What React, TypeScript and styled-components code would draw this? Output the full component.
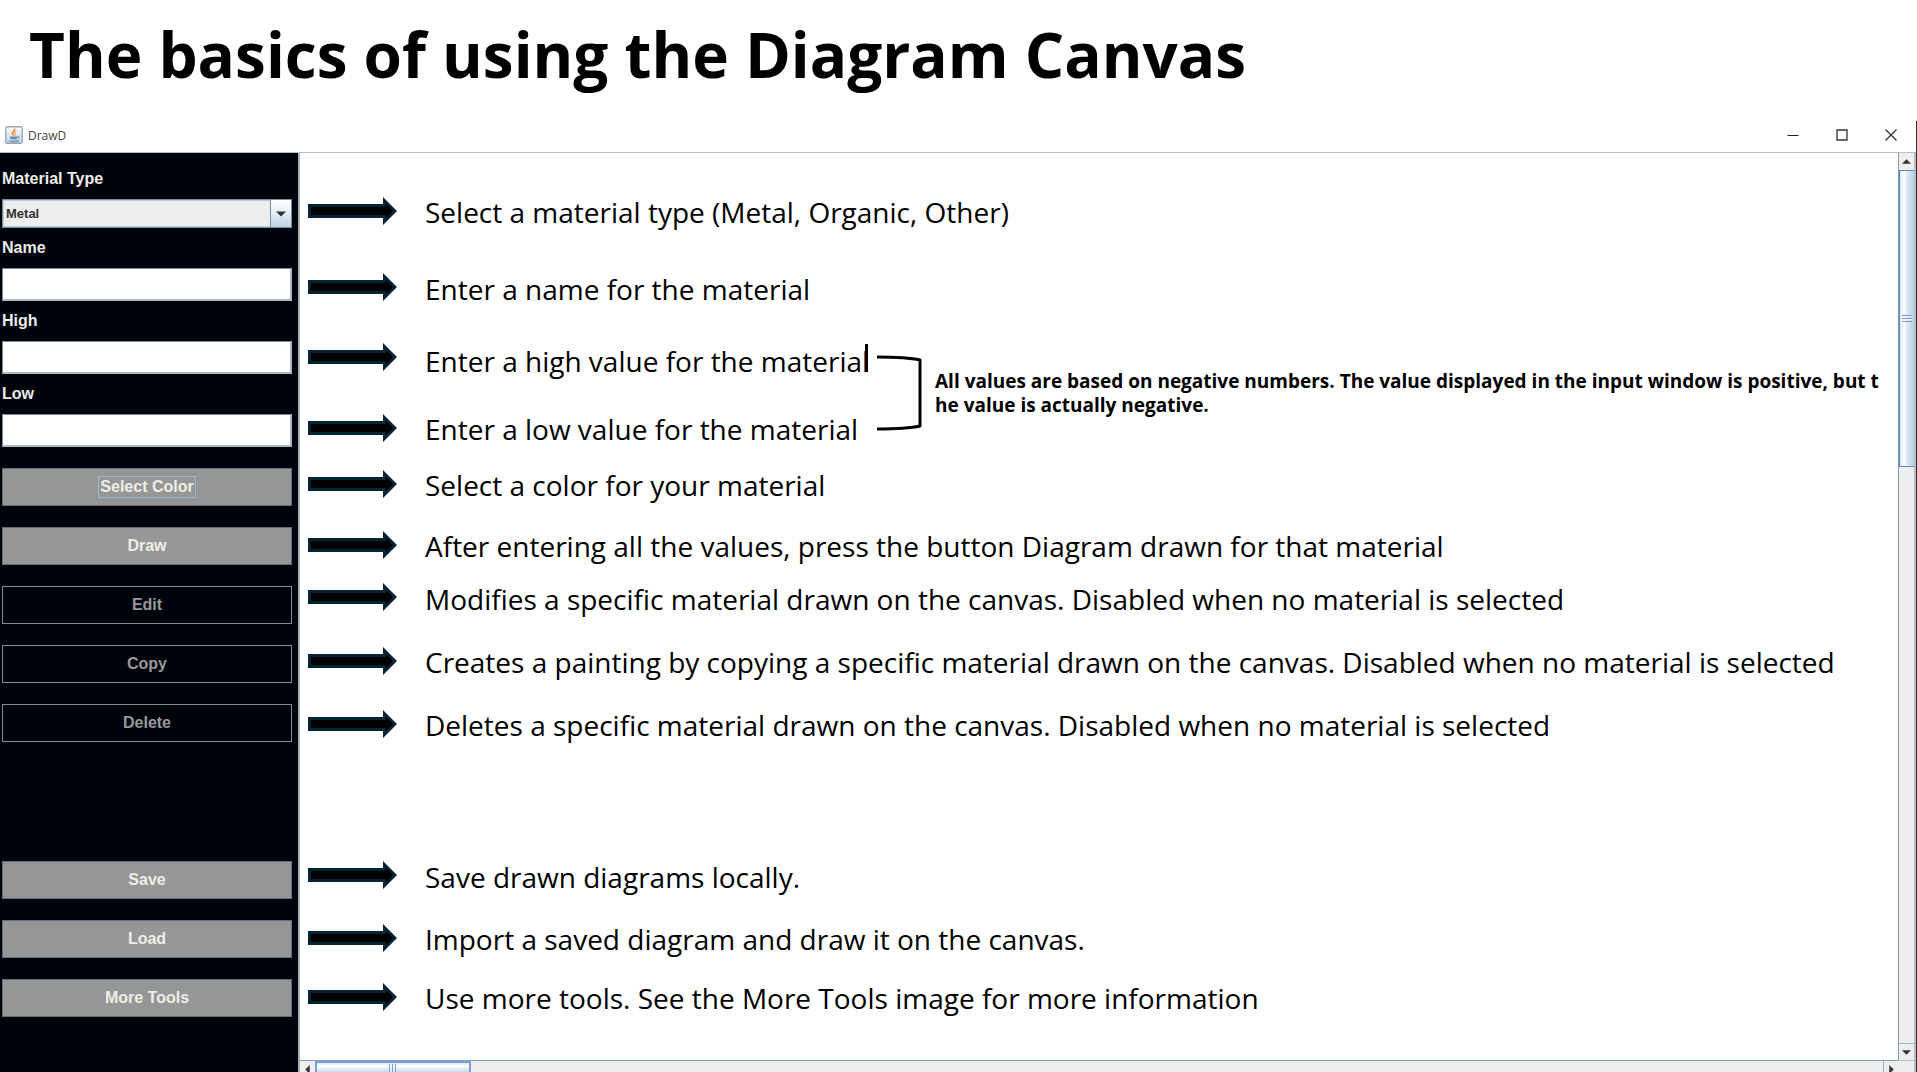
import React from "react";
import styled, { createGlobalStyle, css } from "styled-components";

const Global = createGlobalStyle`
  *, *::before, *::after { box-sizing: border-box; }
  html, body, #root { height: 100%; }
  body { margin: 0; background: #fff; color: #000; overflow: hidden; }
`;

const slideFont = css`font-family: "Open Sans", "Noto Sans", sans-serif;`;
const swingFont = css`font-family: "Liberation Sans", Arial, sans-serif; font-weight: 700;`;

const Page = styled.main`
  ${slideFont}
  height: 100%;
  display: flex;
  flex-direction: column;
`;

const Title = styled.h1`
  flex: none;
  margin: 0;
  padding: 10px 29px 23px;
  font-size: 62px;
  line-height: 88px;
  font-weight: 700;
  white-space: nowrap;
`;

const Frame = styled.section`
  flex: 1;
  min-height: 0;
  display: flex;
  flex-direction: column;
  border-right: 1px solid #2b2b2b;
`;

const TitleBar = styled.header`
  flex: none;
  height: 31px;
  display: flex;
  align-items: center;
  gap: 5px;
  padding: 0 13px 3px 5px;
  font-size: 12px;
  color: #444;
`;

const WindowButtons = styled.div`
  margin-left: auto;
  display: flex;
  gap: 25px;
`;

const WindowButton = styled.button`
  width: 24px;
  height: 24px;
  padding: 0;
  border: 0;
  background: none;
  display: grid;
  place-items: center;
`;

const Body = styled.div`
  flex: 1;
  min-height: 0;
  display: flex;
  border-top: 1px solid #b4bfca;
`;

const Sidebar = styled.form`
  flex: none;
  width: 298px;
  padding: 6px 6px 0 2px;
  background: #00020c;
  overflow: hidden;
`;

const Label = styled.label`
  ${swingFont}
  display: flex;
  align-items: center;
  height: 40px;
  font-size: 16px;
  color: #eeeee6;
`;

const SelectBox = styled.div`
  display: grid;
  height: 29px;
  border: 1px solid #7a8a99;
  background: #eee;
  grid-template-columns: 1fr 21px;
`;

const Select = styled.select`
  ${swingFont}
  grid-area: 1 / 1 / 2 / 3;
  appearance: none;
  border: 1px solid #b8cfe5;
  margin: 0;
  padding: 0 2px;
  font-size: 13px;
  color: #333;
  background: transparent;
`;

const SelectArrow = styled.span`
  grid-area: 1 / 2 / 2 / 3;
  display: grid;
  place-items: center;
  border-left: 1px solid #7a8a99;
  background: linear-gradient(#fff, #e4edf6 50%, #bcd1e6);
  pointer-events: none;
`;

const Field = styled.input`
  ${swingFont}
  display: block;
  width: 100%;
  height: 33px;
  padding: 0 4px;
  border: 1px solid #7a8a99;
  border-right: 2px solid #b0b8c2;
  border-bottom: 2px solid #b0b8c2;
  font-size: 16px;
  background: #fff;
`;

const Buttons = styled.div`
  display: flex;
  flex-direction: column;
  gap: 21px;
  padding-top: 21px;
`;

const FileButtons = styled(Buttons)`
  padding-top: 119px;
`;

const Button = styled.button`
  ${swingFont}
  height: 38px;
  padding: 0;
  border: 1px solid #5f6f7f;
  background: #969696;
  color: #eeeee6;
  font-size: 16px;

  &:disabled {
    border-color: #8a8a8a;
    background: #00020c;
    color: #999;
  }
`;

const Focused = styled.span`
  display: inline-block;
  padding: 0 1px;
  line-height: 20px;
  outline: 1px solid #9fb8d2;
`;

const Viewport = styled.div`
  flex: 1;
  min-width: 0;
  display: grid;
  grid-template-columns: minmax(0, 1fr) 18px;
  grid-template-rows: minmax(0, 1fr) 12px;
  border-left: 2px solid #a8b2be;
`;

const Canvas = styled.div`
  position: relative;
  display: flex;
  gap: 28px;
  padding-left: 8px;
`;

const ArrowColumn = styled.div`
  flex: none;
  width: 89px;
`;

const NoteList = styled.ol`
  margin: 0;
  padding: 0;
  list-style: none;
  font-size: 28px;
  line-height: 40px;
  white-space: nowrap;
`;

const ArrowCell = styled.div<{ $gap: number }>`
  height: 28px;
  margin-top: ${(p) => p.$gap}px;
  svg { display: block; }
`;

const Note = styled.li<{ $gap: number }>`
  height: 40px;
  margin-top: ${(p) => p.$gap}px;
`;

const Remark = styled.aside`
  position: absolute;
  top: 202px;
  left: 577px;
  display: flex;
  align-items: center;
  gap: 13px;
  z-index: 1;
`;

const RemarkText = styled.p`
  margin: 0;
  font-size: 19px;
  line-height: 24px;
  font-weight: 700;
  white-space: nowrap;
`;

const Caret = styled.span`
  display: inline-block;
  width: 3px;
  height: 28px;
  margin-left: -4px;
  background: #000;
`;

const VBar = styled.div`
  display: flex;
  flex-direction: column;
  border-left: 1px solid #7f9db9;
  border-right: 2px solid #b8bfc6;
  background: #eee;
`;

const HBar = styled.div`
  display: flex;
  overflow: hidden;
  border-top: 1px solid #7f9db9;
  background: #eee;
`;

const BarButton = styled.button`
  flex: none;
  width: 15px;
  height: 17px;
  padding: 0;
  border: 0;
  background: #eee;
  display: grid;
  place-items: center;
`;

const EndButton = styled(BarButton)<{ $edge: "top" | "left" }>`
  border-${(p) => p.$edge}: 1px solid #9fb1c4;
`;

const Track = styled.div<{ $vertical?: boolean }>`
  flex: 1;
  display: flex;
  flex-direction: ${(p) => (p.$vertical ? "column" : "row")};
`;

const VThumb = styled.div`
  height: 34%;
  display: grid;
  place-items: center;
  border: 1px solid #6382bf;
  border-width: 1px 0 1px 1px;
  background: linear-gradient(90deg, #dbe7f2, #fff 30%, #dfe9f3 50%, #b8cfe5);
`;

const HThumb = styled.div`
  width: 156px;
  height: 16px;
  display: grid;
  place-items: center;
  border: 2px solid #7f9fd4;
  background: linear-gradient(#dbe7f2, #fff 25%, #dfe9f3 50%, #b8cfe5);
`;

const Corner = styled.div`
  border-top: 1px solid #b4bfca;
  border-right: 2px solid #b8bfc6;
  background: #eee;
`;

const Triangle = ({ turn, size = 9 }: { turn: number; size?: number }) => (
  <svg width={size} height={size} viewBox="0 0 10 10" aria-hidden="true">
    <path d="M0 2.5H10L5 7.5Z" fill="#333" transform={`rotate(${turn} 5 5)`} />
  </svg>
);

const Grip = ({ turn = 0 }: { turn?: number }) => (
  <svg width="10" height="10" viewBox="0 0 10 10" aria-hidden="true">
    <g transform={`rotate(${turn} 5 5)`}>
      <path d="M0 2.5H10M0 5.5H10M0 8.5H10" stroke="#7f9fd4" />
      <path d="M0 3.5H10M0 6.5H10" stroke="#e8f0fa" />
    </g>
  </svg>
);

const Arrow = () => (
  <svg width="89" height="28" viewBox="0 0 89 28">
    <path d="M0 7H75V0L89 14L75 28V21H0Z" fill="#042433" />
    <path d="M3 10H78V7L85 14L78 21V18H3Z" fill="#000" />
  </svg>
);

const JavaIcon = () => (
  <svg width="18" height="18" viewBox="0 0 18 18" aria-hidden="true">
    <defs>
      <linearGradient id="tile" x1="0" y1="0" x2="0" y2="1">
        <stop offset="0" stopColor="#fbfdff" />
        <stop offset="1" stopColor="#c3d3e0" />
      </linearGradient>
    </defs>
    <rect x="0.75" y="0.75" width="16.5" height="16.5" rx="1.5" fill="url(#tile)" stroke="#8fa9bd" strokeWidth="1.3" />
    <path d="M9.6 2.5C10.8 4.6 6.6 5.6 7.6 7.6C8 8.6 8.8 8.8 8.6 9.6" fill="none" stroke="#ec8b3c" strokeWidth="1.6" />
    <path d="M11.6 5C9.4 6 9.4 7 10.2 8.2C10.4 8.8 10 9.2 9.8 9.6" fill="none" stroke="#f0a35e" strokeWidth="1.1" />
    <path d="M5 10.4H12V12.2Q11.6 13.4 8.6 13.4T5 12.2Z" fill="#6d8da8" />
    <path d="M12 10.4Q14.6 9.8 14 11.4Q13.4 12.6 11.8 12.8" fill="none" stroke="#6d8da8" strokeWidth="1" />
    <path d="M4 14.8Q9 16 14 14.6" fill="none" stroke="#6d8da8" strokeWidth="1.1" />
  </svg>
);

const Bracket = () => (
  <svg width="45" height="76" viewBox="0 0 45 76" aria-hidden="true">
    <path d="M0 2Q30 2 43 5V71Q30 74 0 74" fill="none" stroke="#000" strokeWidth="3" strokeLinejoin="round" />
  </svg>
);

const arrowGaps = [44, 48, 42, 43, 28, 33, 24, 36, 35, 123, 35, 31];

const notes: { gap: number; text: string; caret?: boolean }[] = [
  { gap: 39, text: "Select a material type (Metal, Organic, Other)" },
  { gap: 37, text: "Enter a name for the material" },
  { gap: 32, text: "Enter a high value for the material", caret: true },
  { gap: 28, text: "Enter a low value for the material" },
  { gap: 16, text: "Select a color for your material" },
  { gap: 21, text: "After entering all the values, press the button Diagram drawn for that material" },
  { gap: 13, text: "Modifies a specific material drawn on the canvas. Disabled when no material is selected" },
  { gap: 23, text: "Creates a painting by copying a specific material drawn on the canvas. Disabled when no material is selected" },
  { gap: 23, text: "Deletes a specific material drawn on the canvas. Disabled when no material is selected" },
  { gap: 112, text: "Save drawn diagrams locally." },
  { gap: 22, text: "Import a saved diagram and draw it on the canvas." },
  { gap: 19, text: "Use more tools. See the More Tools image for more information" },
];

export default function App() {
  return (
    <>
      <Global />
      <Page>
        <Title>The basics of using the Diagram Canvas</Title>
        <Frame>
          <TitleBar>
            <JavaIcon />
            <span>DrawD</span>
            <WindowButtons>
              <WindowButton aria-label="Minimize">
                <svg width="12" height="12" viewBox="0 0 12 12"><path d="M0.5 6.5H11.5" stroke="#222" /></svg>
              </WindowButton>
              <WindowButton aria-label="Maximize">
                <svg width="12" height="12" viewBox="0 0 12 12"><path d="M1 1H11V11H1Z" fill="none" stroke="#333" strokeWidth="1.3" /></svg>
              </WindowButton>
              <WindowButton aria-label="Close">
                <svg width="12" height="12" viewBox="0 0 12 12"><path d="M0.5 0.5L11.5 11.5M11.5 0.5L0.5 11.5" stroke="#333" strokeWidth="1.3" /></svg>
              </WindowButton>
            </WindowButtons>
          </TitleBar>
          <Body>
            <Sidebar onSubmit={(e) => e.preventDefault()}>
              <Label htmlFor="type">Material Type</Label>
              <SelectBox>
                <Select id="type" defaultValue="Metal">
                  <option>Metal</option>
                  <option>Organic</option>
                  <option>Other</option>
                </Select>
                <SelectArrow><Triangle turn={0} size={10} /></SelectArrow>
              </SelectBox>
              <Label htmlFor="name">Name</Label>
              <Field id="name" />
              <Label htmlFor="high">High</Label>
              <Field id="high" />
              <Label htmlFor="low">Low</Label>
              <Field id="low" />
              <Buttons>
                <Button type="button"><Focused>Select Color</Focused></Button>
                <Button type="button">Draw</Button>
                <Button type="button" disabled>Edit</Button>
                <Button type="button" disabled>Copy</Button>
                <Button type="button" disabled>Delete</Button>
              </Buttons>
              <FileButtons>
                <Button type="button">Save</Button>
                <Button type="button">Load</Button>
                <Button type="button">More Tools</Button>
              </FileButtons>
            </Sidebar>
            <Viewport>
              <Canvas>
                <ArrowColumn aria-hidden="true">
                  {arrowGaps.map((gap, i) => (
                    <ArrowCell key={i} $gap={gap}><Arrow /></ArrowCell>
                  ))}
                </ArrowColumn>
                <NoteList>
                  {notes.map((n, i) => (
                    <Note key={i} $gap={n.gap}>
                      {n.text}
                      {n.caret && <Caret />}
                    </Note>
                  ))}
                </NoteList>
                <Remark>
                  <Bracket />
                  <RemarkText>
                    All values are based on negative numbers. The value displayed in the input window is positive, but t<br />
                    he value is actually negative.
                  </RemarkText>
                </Remark>
              </Canvas>
              <VBar>
                <BarButton aria-label="Scroll up"><Triangle turn={180} /></BarButton>
                <Track $vertical><VThumb><Grip /></VThumb></Track>
                <EndButton $edge="top" aria-label="Scroll down"><Triangle turn={0} /></EndButton>
              </VBar>
              <HBar>
                <BarButton aria-label="Scroll left"><Triangle turn={90} /></BarButton>
                <Track><HThumb><Grip turn={90} /></HThumb></Track>
                <EndButton $edge="left" aria-label="Scroll right"><Triangle turn={-90} /></EndButton>
              </HBar>
              <Corner />
            </Viewport>
          </Body>
        </Frame>
      </Page>
    </>
  );
}
